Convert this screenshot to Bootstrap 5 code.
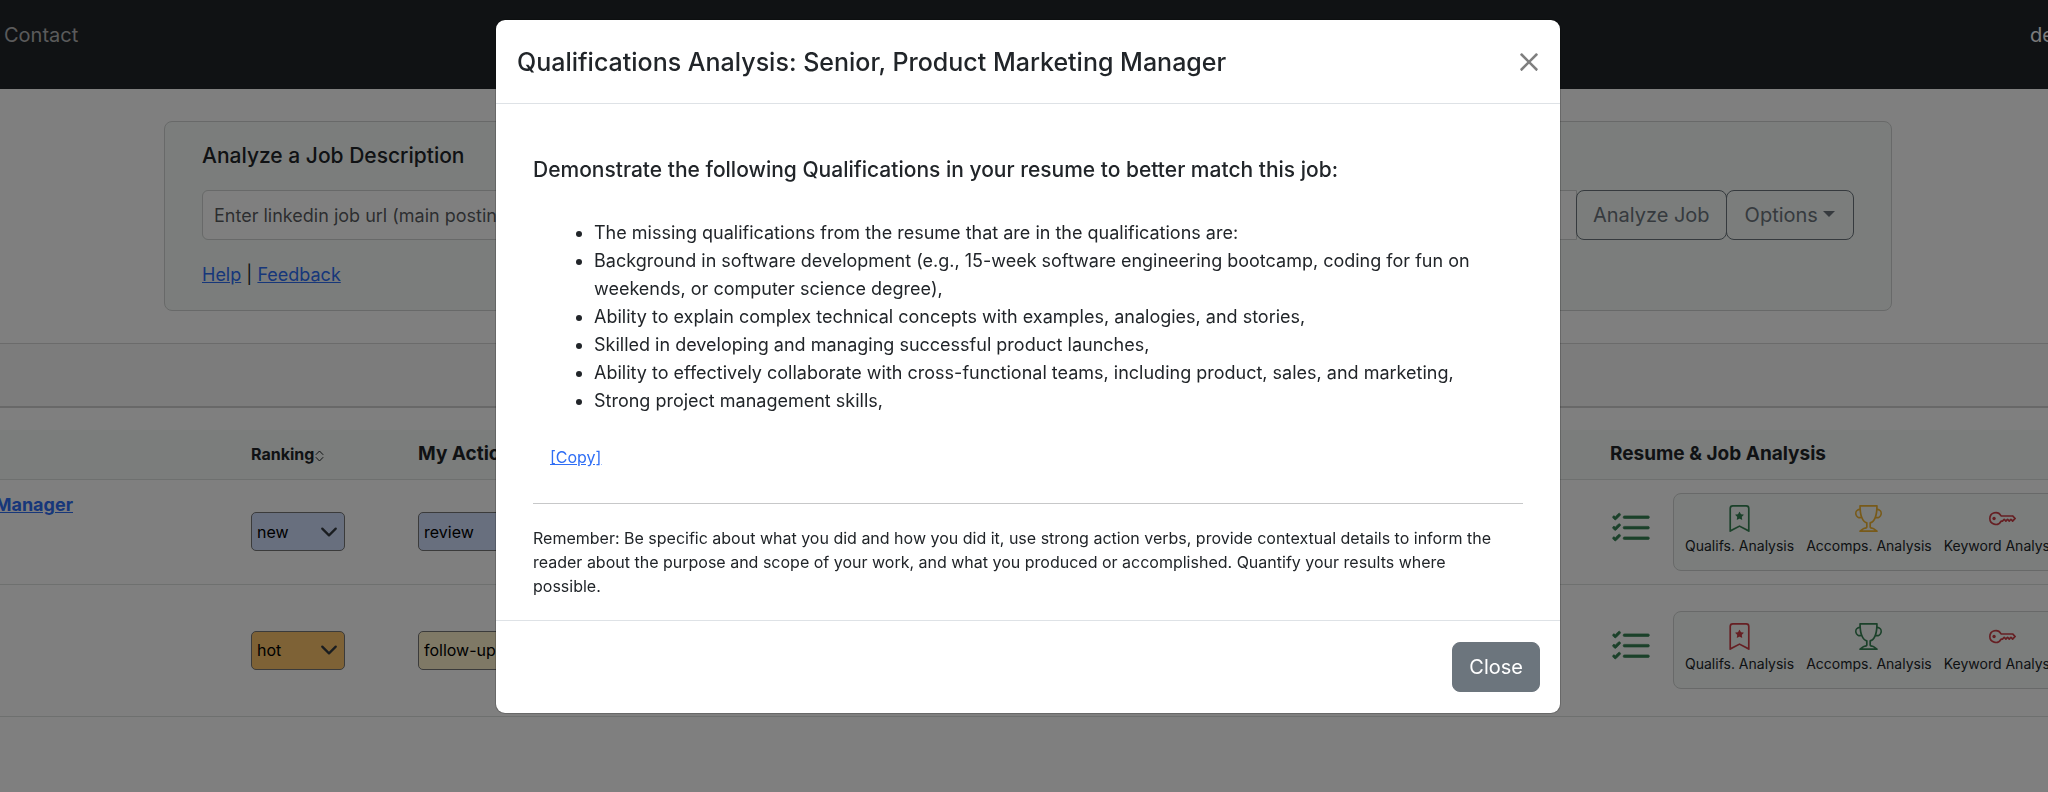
<!DOCTYPE html>
<html lang="en">
<head>
<meta charset="utf-8">
<meta name="viewport" content="width=device-width, initial-scale=1">
<title>Job Analysis</title>
<link href="https://cdn.jsdelivr.net/npm/bootstrap@5.3.0/dist/css/bootstrap.min.css" rel="stylesheet">
<style>
  :root { --bs-link-color-rgb: 47, 110, 245; --bs-link-color: #2f6ef5; --bs-success-rgb: 54, 130, 84; --bs-danger-rgb: 204, 62, 70; --bs-warning-rgb: 240, 180, 50; }
  body { font-family: Inter, "Liberation Sans", sans-serif; font-size: 18px; line-height: 28px; color: #212529; overflow: hidden; }
  .site-bar { height: 89px; padding: 20px 0 0; font-size: 20px; line-height: 30px; }
  .site-bar .nav-link { color: #b4b5b6; padding: 0 0 0 4px; }
  .site-bar .user-link { color: #f8f9fa; width: 18px; padding: 0; white-space: nowrap; }
  .tint { background: #f6fbf8; }
  .job-card { width: calc(100% - 320px); margin: 32px 156px 32px 164px; height: 190px; padding: 20px 37px; border: 1px solid #d0d3d2; border-radius: 8px; }
  .job-card h2 { font-size: 21px; line-height: 28px; margin: 0 0 20px; font-weight: 500; }
  .job-card .form-control { height: 50px; font-size: 18px; padding: 8px 11px; border-color: #d0d3d2; }
  .btn { --bs-btn-font-size: 20px; --bs-btn-border-radius: 8px; --bs-btn-padding-x: 16px; height: 50px; line-height: 32px; }
  .btn.dropdown-toggle { --bs-btn-padding-x: 18px; }
  .job-card .input-group > .btn { border-radius: 8px !important; margin-left: 0; }
  .job-card p { margin: 21px 0 0; }
  .strip { height: 65px; background: #f8f8f8; border-top: 1px solid #d6d6d6; border-bottom: 2px solid #d0d0d0; margin-bottom: 22px; }
  .jobs { table-layout: fixed; width: 100%; margin: 0; }
  .jobs th, .jobs td { padding: 0 13px; border-bottom: 1px solid #dde0df; vertical-align: middle; }
  .jobs thead th { height: 49px; background: #f6fbf8; white-space: nowrap; font-size: 19px; font-weight: 700; }
  .jobs thead th.sortable { font-size: 16px; }
  .jobs tbody tr:first-child td { height: 105px; }
  .jobs tbody tr:last-child td { height: 132px; }
  .c-title { width: 238px; } .c-rank { width: 167px; } .c-result { width: 451px; }
  .jobs td.title-cell { padding: 11px 165px 0 0; vertical-align: top; direction: rtl; white-space: nowrap; overflow: hidden; font-weight: 700; }
  .job-select { height: 39px; padding: 0 30px 0 5px; border: 1px solid #767676; border-radius: 5px; font-size: 16px; color: #000; background-position: right 6px center; background-size: 18px 18px; }
  .w-rank { width: 94px; } .w-action { width: 130px; }
  .is-new { background-color: #d0defc; } .is-hot { background-color: #fcc46c; } .is-follow { background-color: #fff3cd; }
  .jobs td.result-cell { overflow: hidden; }
  .check-icon { width: 42px; height: 42px; margin: 0 21px 6px 0; stroke: currentColor; stroke-width: .25px; }
  .sort-icon { margin-left: -3px; }
  .analysis { height: 78px; flex: none; padding: 11px; gap: 12px; border: 1px solid #d0d3d2; border-radius: 8px; font-size: 14px; line-height: 20px; white-space: nowrap; }
  .analysis a { color: #212529; text-decoration: none; text-align: center; }
  .analysis svg { display: block; width: 27px; height: 27px; margin: 0 auto 4px; }
  .modal { padding-left: 8px; overflow: hidden; }
  .modal-dialog { max-width: 1066px; margin: 19px auto; }
  .modal-content { border-radius: 10px; border-color: rgba(0,0,0,.18); background-clip: padding-box; }
  .modal-header { height: 84px; padding: 21px; }
  .modal-title { font-size: 25px; line-height: 40px; font-weight: 500; }
  .modal-header .btn-close { padding: 0; margin: 0 0 0 auto; background-size: 20px; width: 20px; height: 20px; }
  .modal-body { padding: 52px 37px 22px; }
  .modal-body h3 { font-size: 21px; line-height: 28px; font-weight: 500; margin: 0 0 35px; }
  .modal-body ul { padding-left: 61px; margin: 0 0 28px; }
  .copy-link { font-size: 16px; margin-left: 17px; }
  .modal-body hr { margin: 32px 0 22px; }
  .reminder { font-size: 16px; line-height: 24px; margin: 0; padding-right: 16px; }
  .modal-footer { padding: 20px; height: 93px; }
  .modal-footer > * { margin: 0; }
</style>
<script src="https://cdn.jsdelivr.net/npm/bootstrap@5.3.0/dist/js/bootstrap.bundle.min.js"></script>
</head>
<body class="modal-open">
<svg class="d-none" aria-hidden="true">
  <symbol id="i-check" viewBox="0 0 16 16"><path d="M5 11.5a.5.5 0 0 1 .5-.5h9a.5.5 0 0 1 0 1h-9a.5.5 0 0 1-.5-.5zm0-4a.5.5 0 0 1 .5-.5h9a.5.5 0 0 1 0 1h-9a.5.5 0 0 1-.5-.5zm0-4a.5.5 0 0 1 .5-.5h9a.5.5 0 0 1 0 1h-9a.5.5 0 0 1-.5-.5zM3.854 2.146a.5.5 0 0 1 0 .708l-1.5 1.5a.5.5 0 0 1-.708 0l-.5-.5a.5.5 0 1 1 .708-.708L2 3.293l1.146-1.147a.5.5 0 0 1 .708 0zm0 4a.5.5 0 0 1 0 .708l-1.5 1.5a.5.5 0 0 1-.708 0l-.5-.5a.5.5 0 1 1 .708-.708L2 7.293l1.146-1.147a.5.5 0 0 1 .708 0zm0 4a.5.5 0 0 1 0 .708l-1.5 1.5a.5.5 0 0 1-.708 0l-.5-.5a.5.5 0 0 1 .708-.708l.146.147 1.146-1.147a.5.5 0 0 1 .708 0z"/></symbol>
  <symbol id="i-star" viewBox="0 0 16 16"><path d="M7.84 4.1a.178.178 0 0 1 .32 0l.634 1.285a.178.178 0 0 0 .134.098l1.42.206c.145.021.204.2.098.303L9.42 6.993a.178.178 0 0 0-.051.158l.242 1.414a.178.178 0 0 1-.258.187l-1.27-.668a.178.178 0 0 0-.165 0l-1.27.668a.178.178 0 0 1-.257-.187l.242-1.414a.178.178 0 0 0-.05-.158l-1.03-1.001a.178.178 0 0 1 .098-.303l1.42-.206a.178.178 0 0 0 .134-.098L7.84 4.1z"/><path d="M2 2a2 2 0 0 1 2-2h8a2 2 0 0 1 2 2v13.5a.5.5 0 0 1-.777.416L8 13.101l-5.223 2.815A.5.5 0 0 1 2 15.5V2zm2-1a1 1 0 0 0-1 1v12.566l4.723-2.482a.5.5 0 0 1 .554 0L13 14.566V2a1 1 0 0 0-1-1H4z"/></symbol>
  <symbol id="i-trophy" viewBox="0 0 16 16"><path d="M2.5.5A.5.5 0 0 1 3 0h10a.5.5 0 0 1 .5.5c0 .538-.012 1.05-.034 1.536a3 3 0 1 1-1.133 5.89c-.79 1.865-1.878 2.777-2.833 3.011v2.173l1.425.356c.194.048.377.135.537.255L13.3 15.1a.5.5 0 0 1-.3.9H3a.5.5 0 0 1-.3-.9l1.838-1.379c.16-.12.343-.207.537-.255L6.5 13.11v-2.173c-.955-.234-2.043-1.146-2.833-3.012a3 3 0 1 1-1.132-5.89A33.076 33.076 0 0 1 2.5.5zm.099 2.54a2 2 0 0 0 .72 3.935c-.333-1.05-.588-2.346-.72-3.935zm10.083 3.935a2 2 0 0 0 .72-3.935c-.133 1.59-.388 2.885-.72 3.935zM3.504 1c.007.517.026 1.006.056 1.469.13 2.028.457 3.546.87 4.667C5.294 9.48 6.484 10 7 10a.5.5 0 0 1 .5.5v2.61a1 1 0 0 1-.757.97l-1.426.356a.5.5 0 0 0-.179.085L4.5 15h7l-.638-.479a.501.501 0 0 0-.18-.085l-1.425-.356a1 1 0 0 1-.757-.97V10.5A.5.5 0 0 1 9 10c.516 0 1.706-.52 2.57-2.864.413-1.12.74-2.64.87-4.667.03-.463.049-.952.056-1.469H3.504z"/></symbol>
  <symbol id="i-key" viewBox="0 0 16 16"><path d="M0 8a4 4 0 0 1 7.465-2H14a.5.5 0 0 1 .354.146l1.5 1.5a.5.5 0 0 1 0 .708l-1.5 1.5a.5.5 0 0 1-.708 0L13 9.207l-.646.647a.5.5 0 0 1-.708 0L11 9.207l-.646.647a.5.5 0 0 1-.708 0L9 9.207l-.646.647A.5.5 0 0 1 8 10h-.535A4 4 0 0 1 0 8zm4-3a3 3 0 1 0 2.712 4.285A.5.5 0 0 1 7.163 9h.63l.853-.854a.5.5 0 0 1 .708 0l.646.647.646-.647a.5.5 0 0 1 .708 0l.646.647.646-.647a.5.5 0 0 1 .708 0l.646.647.793-.793-1-1h-6.63a.5.5 0 0 1-.451-.285A3 3 0 0 0 4 5z"/><path d="M4 8a1 1 0 1 1-2 0 1 1 0 0 1 2 0z"/></symbol>
</svg>

<nav class="site-bar bg-dark d-flex justify-content-between align-items-start overflow-hidden">
  <a class="nav-link" href="#">Contact</a>
  <a class="nav-link user-link" href="#">de</a>
</nav>

<main>
  <section class="job-card tint">
    <h2><label for="job-url">Analyze a Job Description</label></h2>
    <div class="input-group">
      <input type="text" class="form-control" id="job-url" placeholder="Enter linkedin job url (main posting)">
      <button type="button" class="btn btn-outline-secondary">Analyze Job</button>
      <button type="button" class="btn btn-outline-secondary dropdown-toggle">Options</button>
    </div>
    <p><a href="#">Help</a> | <a href="#">Feedback</a></p>
  </section>
  <div class="strip"></div>
  <table class="table jobs">
    <colgroup><col class="c-title"><col class="c-rank"><col><col class="c-result"></colgroup>
    <thead>
      <tr>
        <th></th>
        <th class="sortable">Ranking <svg class="sort-icon" width="9" height="12" viewBox="0 0 9 12" fill="none" stroke="currentColor" aria-hidden="true"><path d="M.8 4.8 4.5 1l3.700 3.800M.8 7.200l3.700 3.800 3.700-3.800"/></svg></th>
        <th>My Action</th>
        <th>Resume &amp; Job Analysis</th>
      </tr>
    </thead>
    <tbody>
      <tr>
        <td class="title-cell"><a href="#">Manager</a></td>
        <td><select class="form-select job-select w-rank is-new" aria-label="Ranking"><option>new</option></select></td>
        <td><select class="form-select job-select w-action is-new" aria-label="My action"><option>review</option></select></td>
        <td class="result-cell"><div class="d-flex align-items-center">
          <svg class="check-icon text-success flex-shrink-0" fill="currentColor"><use href="#i-check"/></svg>
          <div class="analysis tint d-flex">
            <a href="#"><svg class="text-success" fill="currentColor"><use href="#i-star"/></svg>Qualifs. Analysis</a>
            <a href="#"><svg class="text-warning" fill="currentColor"><use href="#i-trophy"/></svg>Accomps. Analysis</a>
            <a href="#"><svg class="text-danger" fill="currentColor"><use href="#i-key"/></svg>Keyword Analysis</a>
          </div></div></td>
      </tr>
      <tr>
        <td></td>
        <td><select class="form-select job-select w-rank is-hot" aria-label="Ranking"><option>hot</option></select></td>
        <td><select class="form-select job-select w-action is-follow" aria-label="My action"><option>follow-up</option></select></td>
        <td class="result-cell"><div class="d-flex align-items-center">
          <svg class="check-icon text-success flex-shrink-0" fill="currentColor"><use href="#i-check"/></svg>
          <div class="analysis tint d-flex">
            <a href="#"><svg class="text-danger" fill="currentColor"><use href="#i-star"/></svg>Qualifs. Analysis</a>
            <a href="#"><svg class="text-success" fill="currentColor"><use href="#i-trophy"/></svg>Accomps. Analysis</a>
            <a href="#"><svg class="text-danger" fill="currentColor"><use href="#i-key"/></svg>Keyword Analysis</a>
          </div></div></td>
      </tr>
    </tbody>
  </table>
</main>

<div class="modal-backdrop show"></div>
<div class="modal show d-block" role="dialog" aria-modal="true" aria-labelledby="analysis-title">
  <div class="modal-dialog">
    <div class="modal-content">
      <div class="modal-header">
        <h1 class="modal-title" id="analysis-title">Qualifications Analysis: Senior, Product Marketing Manager</h1>
        <button type="button" class="btn-close" data-bs-dismiss="modal" aria-label="Close"></button>
      </div>
      <div class="modal-body">
        <h3>Demonstrate the following Qualifications in your resume to better match this job:</h3>
        <ul>
          <li>The missing qualifications from the resume that are in the qualifications are:</li>
          <li>Background in software development (e.g., 15-week software engineering bootcamp, coding for fun on weekends, or computer science degree),</li>
          <li>Ability to explain complex technical concepts with examples, analogies, and stories,</li>
          <li>Skilled in developing and managing successful product launches,</li>
          <li>Ability to effectively collaborate with cross-functional teams, including product, sales, and marketing,</li>
          <li>Strong project management skills,</li>
        </ul>
        <a class="copy-link" href="#">[Copy]</a>
        <hr>
        <p class="reminder">Remember: Be specific about what you did and how you did it, use strong action verbs, provide contextual details to inform the reader about the purpose and scope of your work, and what you produced or accomplished. Quantify your results where possible.</p>
      </div>
      <div class="modal-footer">
        <button type="button" class="btn btn-secondary" data-bs-dismiss="modal">Close</button>
      </div>
    </div>
  </div>
</div>
</body>
</html>
